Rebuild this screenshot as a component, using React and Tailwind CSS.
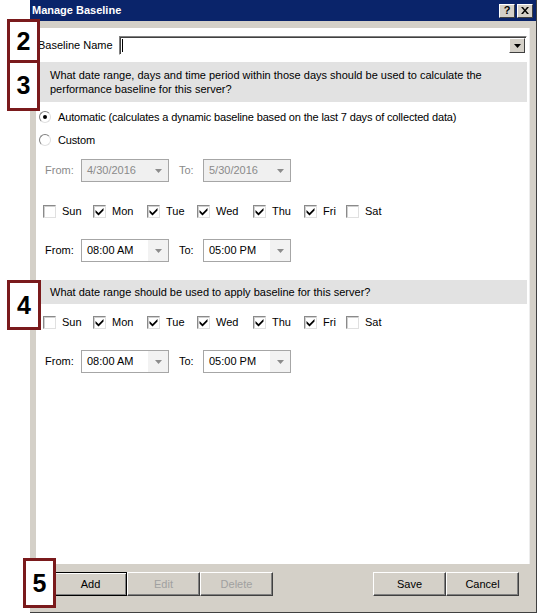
import React from "react";

const font = { fontFamily: '"Liberation Sans", Arial, sans-serif' };

function Arrow({ color = "#7a7a7a" }) {
  return (
    <svg width="7" height="4" viewBox="0 0 7 4">
      <path d="M0 0 L7 0 L3.5 4 Z" fill={color} />
    </svg>
  );
}

function Combo({ value, disabled, width = "w-[88px]" }) {
  return (
    <div
      className={`${width} h-[23px] flex items-stretch border border-[#a6a6a6] ${disabled ? "bg-[#f0f0f0]" : "bg-white"}`}
    >
      <div className={`flex-1 flex items-center pl-[5px] text-[11px] ${disabled ? "text-[#8a8a8a]" : "text-black"}`}>{value}</div>
      <div className={`w-[20px] flex items-center justify-center ${disabled ? "bg-[#f0f0f0]" : "bg-[#f2f2f2]"}`}>
        <Arrow color="#8c8c8c" />
      </div>
    </div>
  );
}

function Check({ checked }) {
  return (
    <div className="w-[13px] h-[13px] bg-white border-t border-l border-[#8a8a8a] border-b border-r border-b-[#e0e0e0] border-r-[#e0e0e0] flex items-center justify-center shadow-[inset_1px_1px_0_#d0d0d0]">
      {checked && (
        <svg width="9" height="9" viewBox="0 0 9 9">
          <path d="M0.5 3 L3.5 6 L8.5 1 L8.5 3.5 L3.5 8.5 L0.5 5.5 Z" fill="#000" />
        </svg>
      )}
    </div>
  );
}

function DayRow() {
  const days = [
    ["Sun", false, "w-[50px]"],
    ["Mon", true, "w-[54px]"],
    ["Tue", true, "w-[50px]"],
    ["Wed", true, "w-[56px]"],
    ["Thu", true, "w-[51px]"],
    ["Fri", true, "w-[42px]"],
    ["Sat", false, "w-[42px]"],
  ];
  return (
    <div className="flex items-center h-[16px] pl-[7px]">
      {days.map(([d, c, w]) => (
        <div key={d} className={`${w} flex items-center gap-[6px]`}>
          <Check checked={c} />
          <span className="text-[11px] text-black">{d}</span>
        </div>
      ))}
    </div>
  );
}

function TimeRow({ a, b, disabled }) {
  const lbl = disabled ? "text-[#8a8a8a]" : "text-black";
  return (
    <div className="flex items-center pl-[9px] h-[23px]">
      <span className={`w-[36px] text-[11px] ${lbl}`}>From:</span>
      <Combo value={a} disabled={disabled} />
      <span className={`ml-[10px] w-[24px] text-[11px] ${lbl}`}>To:</span>
      <Combo value={b} disabled={disabled} />
    </div>
  );
}

function Radio({ checked, label }) {
  return (
    <div className="flex items-center h-[16px] pl-[3px] gap-[7px]">
      <div className="w-[12px] h-[12px] rounded-full bg-white border border-t-[#808080] border-l-[#808080] border-b-[#e0e0e0] border-r-[#e0e0e0] flex items-center justify-center">
        {checked && <div className="w-[4px] h-[4px] rounded-full bg-black" />}
      </div>
      <span className="text-[11px] text-black tracking-[-0.15px]">{label}</span>
    </div>
  );
}

function Btn({ children, disabled, def }) {
  return (
    <div
      className={`w-[73px] h-[24px] flex items-center justify-center text-[11px] bg-[#d4d0c8] ${
        def
          ? "border border-black shadow-[inset_1px_1px_0_#fff,inset_-1px_-1px_0_#808080]"
          : "border border-t-white border-l-white border-b-[#404040] border-r-[#404040] shadow-[inset_-1px_-1px_0_#808080]"
      } ${disabled ? "text-[#a0a0a0]" : "text-black"}`}
    >
      {children}
    </div>
  );
}

function Annot({ n, cls }) {
  return (
    <div className={`absolute ${cls} border-[3px] border-[#7a1a1c] bg-white flex items-center justify-center`}>
      <span className="text-[25px] font-bold text-black leading-none">{n}</span>
    </div>
  );
}

export default function App() {
  return (
    <div className="relative w-[539px] h-[614px] bg-white overflow-hidden" style={font}>
      <div className="ml-[30px] w-[507px] h-[613px] bg-[#d4d0c8] flex flex-col border-r border-b border-[#404040]">
        <div className="h-[21px] bg-[#0a246a] flex items-center justify-between pl-[2px] pr-[3px]">
          <span className="text-white font-bold text-[11px]">Manage Baseline</span>
          <div className="flex gap-[2px]">
            <div className="w-[16px] h-[14px] bg-[#d4d0c8] border border-t-white border-l-white border-b-[#404040] border-r-[#404040] flex items-center justify-center text-[11px] font-bold leading-none">?</div>
            <div className="w-[16px] h-[14px] bg-[#d4d0c8] border border-t-white border-l-white border-b-[#404040] border-r-[#404040] flex items-center justify-center">
              <svg width="8" height="7" viewBox="0 0 8 7">
                <path d="M0 0 L2 0 L4 2.5 L6 0 L8 0 L5 3.5 L8 7 L6 7 L4 4.5 L2 7 L0 7 L3 3.5 Z" fill="#000" />
              </svg>
            </div>
          </div>
        </div>
        <div className="flex-1 flex flex-col px-[6px] pt-[7px]">
          <div className="h-[536px] bg-white flex flex-col border-r border-[#ededed]">
            <div className="flex items-center mt-[8px] h-[19px] pl-[2px]">
              <span className="w-[81px] text-[11px] text-black">Baseline Name</span>
              <div className="w-[408px] h-[19px] bg-white border border-t-[#808080] border-l-[#808080] border-b-white border-r-white shadow-[inset_1px_1px_0_#404040] flex items-center">
                <div className="ml-[2px] w-[1px] h-[13px] bg-black" />
                <div className="flex-1" />
                <div className="w-[16px] h-[15px] mr-[1px] bg-[#d4d0c8] border border-t-white border-l-white border-b-[#404040] border-r-[#404040] flex items-center justify-center">
                  <Arrow color="#000" />
                </div>
              </div>
            </div>
            <div className="mt-[7px] ml-[1px] mr-[2px] h-[40px] bg-[#e2e2e2] pl-[13px] pt-[6px] text-[11px] leading-[14px] text-black">
              What date range, days and time period within those days should be used to calculate the
              <br />
              performance baseline for this server?
            </div>
            <div className="mt-[7px]">
              <Radio checked label="Automatic (calculates a dynamic baseline based on the last 7 days of collected data)" />
            </div>
            <div className="mt-[7px]">
              <Radio label="Custom" />
            </div>
            <div className="mt-[11px]">
              <TimeRow a="4/30/2016" b="5/30/2016" disabled />
            </div>
            <div className="mt-[21px]">
              <DayRow />
            </div>
            <div className="mt-[20px]">
              <TimeRow a="08:00 AM" b="05:00 PM" />
            </div>
            <div className="mt-[18px] ml-[1px] mr-[2px] h-[24px] bg-[#e2e2e2] pl-[13px] flex items-center text-[11px] text-black">
              What date range should be used to apply baseline for this server?
            </div>
            <div className="mt-[10px]">
              <DayRow />
            </div>
            <div className="mt-[20px]">
              <TimeRow a="08:00 AM" b="05:00 PM" />
            </div>
          </div>
          <div className="flex items-center mt-[8px] pl-[18px] pr-[11px]">
            <Btn def>Add</Btn>
            <Btn disabled>Edit</Btn>
            <Btn disabled>Delete</Btn>
            <div className="flex-1" />
            <Btn>Save</Btn>
            <Btn>Cancel</Btn>
          </div>
        </div>
      </div>
      <Annot n="2" cls="left-[7px] top-[19px] w-[33px] h-[44px]" />
      <Annot n="3" cls="left-[7px] top-[60px] w-[33px] h-[51px]" />
      <Annot n="4" cls="left-[7px] top-[280px] w-[34px] h-[50px]" />
      <Annot n="5" cls="left-[23px] top-[558px] w-[33px] h-[50px]" />
    </div>
  );
}
